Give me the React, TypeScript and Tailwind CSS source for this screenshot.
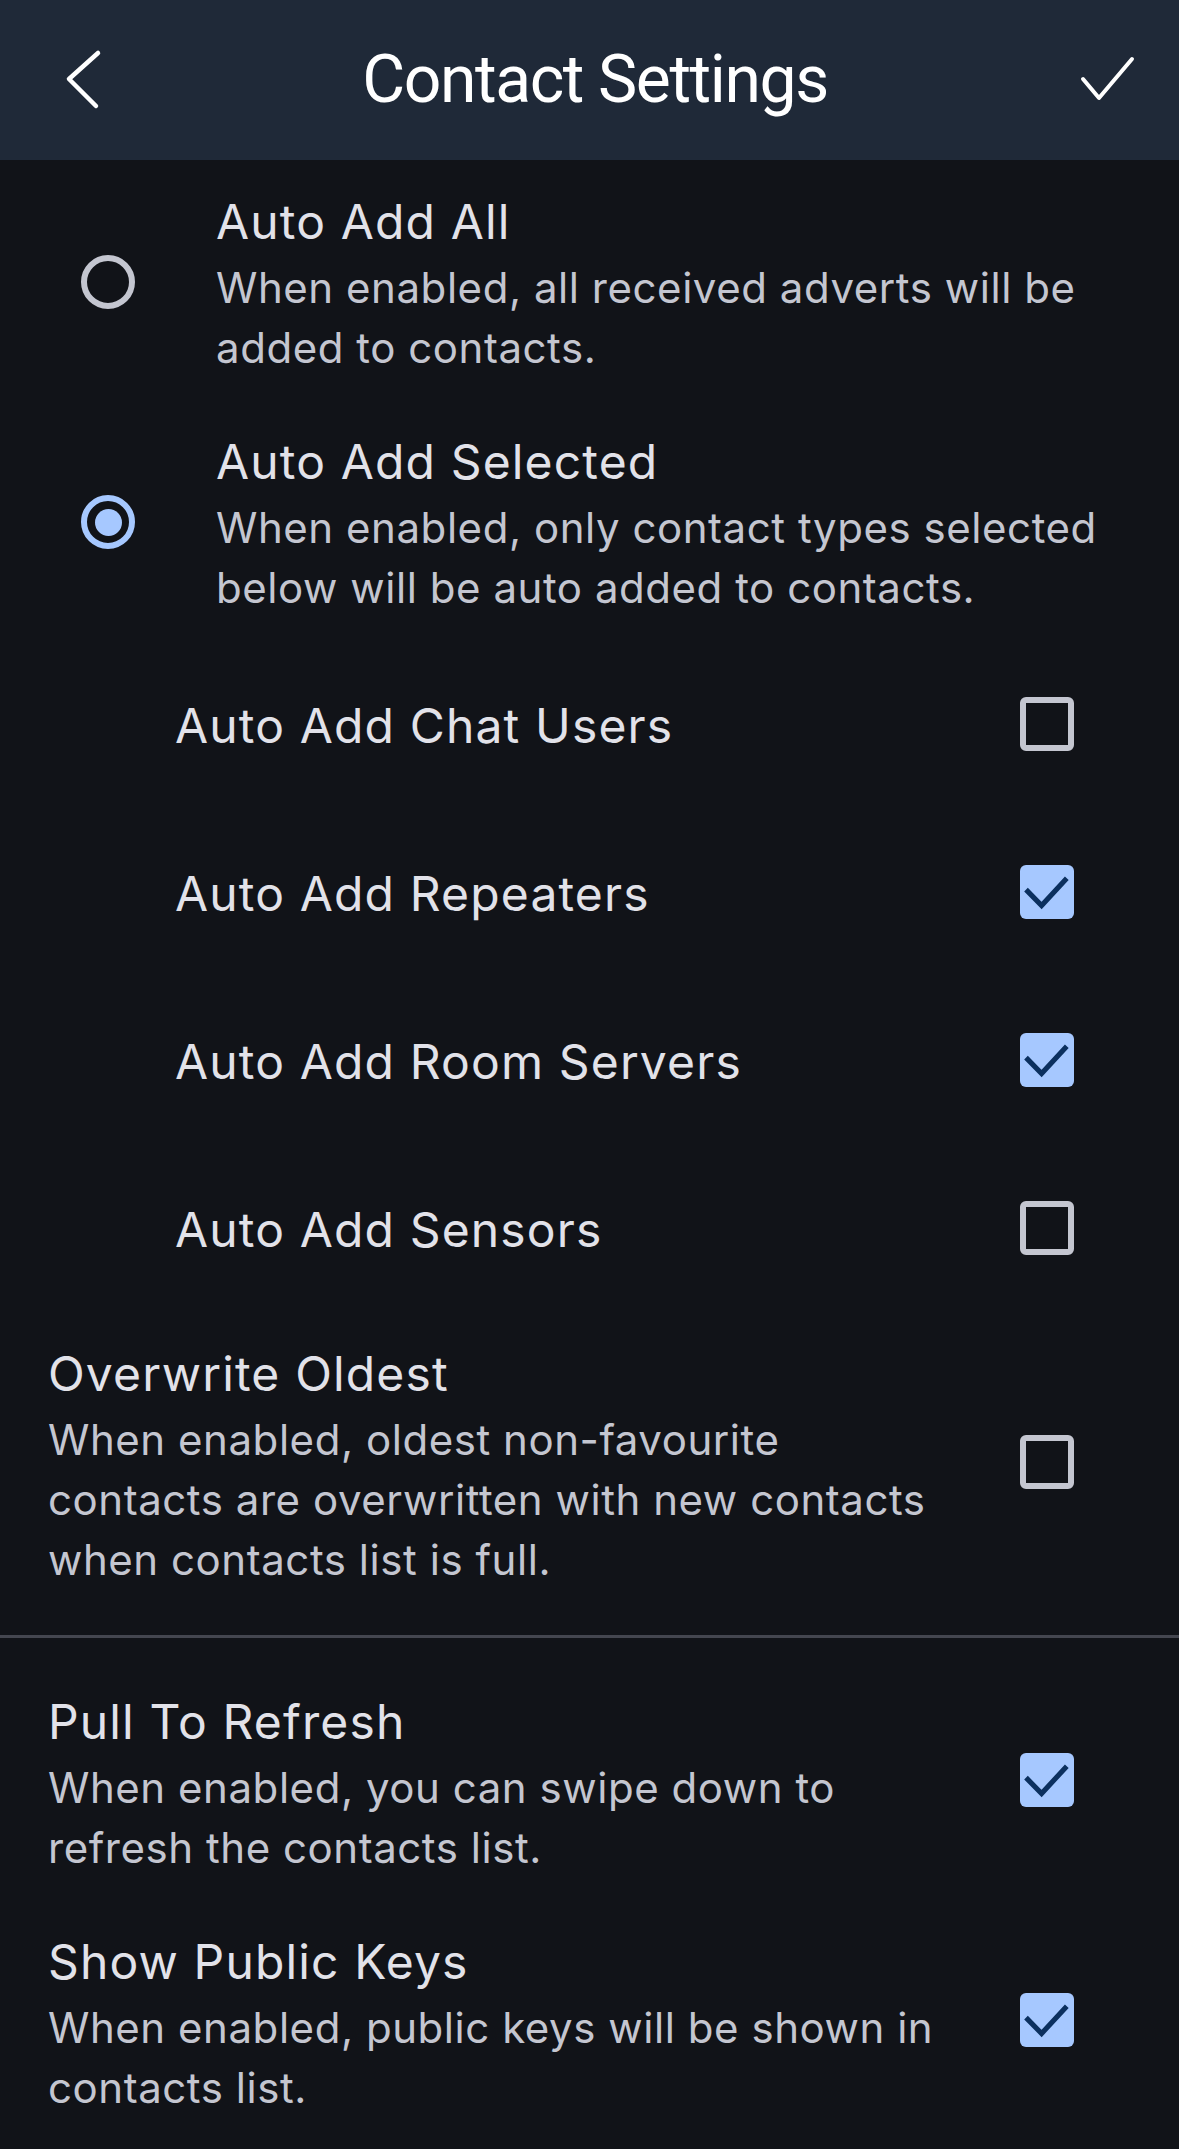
import React from "react";

const font = { fontFamily: "Inter, 'Noto Sans', sans-serif" };

function Radio({ selected }: { selected: boolean }) {
  return (
    <div className="flex w-[120px] shrink-0 items-center justify-center">
      {selected ? (
        <div className="flex h-[54px] w-[54px] items-center justify-center rounded-full border-[6px] border-[#a6c8ff]">
          <div className="h-[27px] w-[27px] rounded-full bg-[#a6c8ff]" />
        </div>
      ) : (
        <div className="h-[54px] w-[54px] rounded-full border-[6px] border-[#c4c6d0]" />
      )}
    </div>
  );
}

function Checkbox({ checked }: { checked: boolean }) {
  return (
    <div className="flex w-[120px] shrink-0 items-center justify-center">
      {checked ? (
        <div className="h-[54px] w-[54px] rounded-[6px] bg-[#a6c8ff]">
          <svg width="54" height="54" viewBox="0 0 18 18">
            <path d="M2 8.2 L7.2 13.5 L15.6 4.4" fill="none" stroke="#0b305f" strokeWidth="1.7" />
          </svg>
        </div>
      ) : (
        <div className="h-[54px] w-[54px] rounded-[6px] border-[6px] border-[#c4c6d0]" />
      )}
    </div>
  );
}

function Title({ children }: { children: React.ReactNode }) {
  return <div className="text-[48px] leading-[72px] tracking-[1.15px] text-[#e2e2e9]">{children}</div>;
}

function Sub({ children }: { children: React.ReactNode }) {
  return <div className="text-[42px] leading-[60px] tracking-[0.55px] text-[#c4c6d0]">{children}</div>;
}

function RadioTile({ selected, title, sub }: { selected: boolean; title: string; sub: string }) {
  return (
    <div className="flex items-center pb-[22px] pl-[48px] pr-[72px] pt-[26px]">
      <Radio selected={selected} />
      <div className="ml-[48px] flex-1">
        <Title>{title}</Title>
        <Sub>{sub}</Sub>
      </div>
    </div>
  );
}

function SubCheckTile({ title, checked }: { title: string; checked: boolean }) {
  return (
    <div className="flex h-[168px] items-center pl-[175px] pr-[72px]">
      <div className="flex-1 pt-[4px]">
        <Title>{title}</Title>
      </div>
      <Checkbox checked={checked} />
    </div>
  );
}

function CheckTile({ title, sub, checked }: { title: string; sub: string; checked: boolean }) {
  return (
    <div className="flex items-center py-[24px] pl-[48px] pr-[72px]">
      <div className="mr-[48px] flex-1 pt-[2px] -mb-[2px]">
        <Title>{title}</Title>
        <Sub>{sub}</Sub>
      </div>
      <Checkbox checked={checked} />
    </div>
  );
}

export default function App() {
  return (
    <div className="min-h-[2149px] w-[1179px] bg-[#111318]" style={font}>
      <header className="flex h-[160px] items-center justify-between bg-[#1f2938] pl-[54px] pr-[43px]">
        <svg width="60" height="60" viewBox="0 0 60 60" className="overflow-visible">
          <path d="M44 3 L15 29 L42 56" fill="none" stroke="#ffffff" strokeWidth="4.5" strokeLinecap="round" strokeLinejoin="round" />
        </svg>
        <div className="text-[66px] leading-none tracking-[-1.4px] text-white" style={{ fontFamily: "Roboto, Inter, sans-serif" }}>
          Contact Settings
        </div>
        <svg width="60" height="60" viewBox="0 0 60 60" className="overflow-visible">
          <path d="M7 29 L23 48 L56 9" fill="none" stroke="#ffffff" strokeWidth="4" strokeLinecap="round" strokeLinejoin="round" />
        </svg>
      </header>
      <RadioTile selected={false} title="Auto Add All" sub="When enabled, all received adverts will be added to contacts." />
      <RadioTile selected={true} title="Auto Add Selected" sub="When enabled, only contact types selected below will be auto added to contacts." />
      <SubCheckTile title="Auto Add Chat Users" checked={false} />
      <SubCheckTile title="Auto Add Repeaters" checked={true} />
      <SubCheckTile title="Auto Add Room Servers" checked={true} />
      <SubCheckTile title="Auto Add Sensors" checked={false} />
      <CheckTile
        title="Overwrite Oldest"
        sub="When enabled, oldest non-favourite contacts are overwritten with new contacts when contacts list is full."
        checked={false}
      />
      <div className="flex h-[48px] items-center">
        <div className="h-[3px] w-full bg-[#44464f]" />
      </div>
      <CheckTile title="Pull To Refresh" sub="When enabled, you can swipe down to refresh the contacts list." checked={true} />
      <CheckTile title="Show Public Keys" sub="When enabled, public keys will be shown in contacts list." checked={true} />
    </div>
  );
}
